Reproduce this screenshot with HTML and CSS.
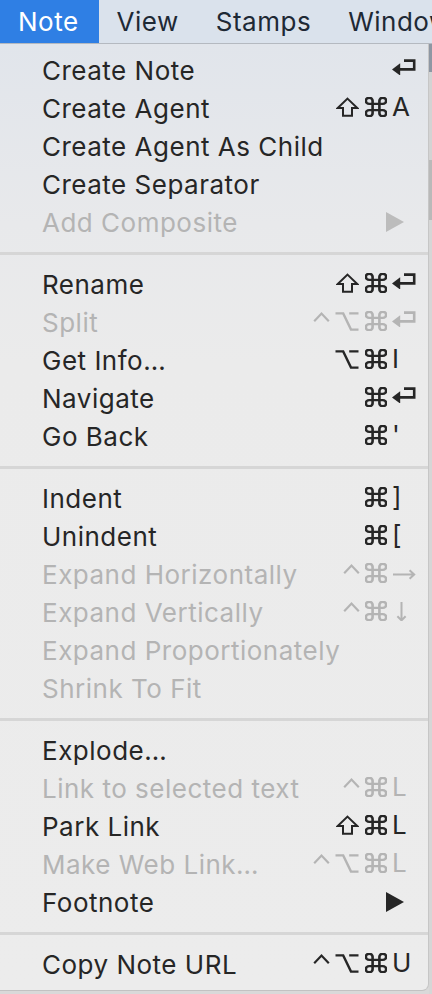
FILE: index.html
```html
<!DOCTYPE html>
<html>
<head>
<meta charset="utf-8">
<link rel="stylesheet" href="styles.css">
</head>
<body>
<svg class="sprite" xmlns="http://www.w3.org/2000/svg">
  <symbol id="i-shift" viewBox="0 0 23 20"><path d="M11.5 1.6L21.3 11H16V18.8H7V11H1.7Z" fill="none" stroke="currentColor" stroke-width="2" stroke-linejoin="miter"/></symbol>
  <symbol id="i-cmd" viewBox="2.3 2.3 19.4 19.4" preserveAspectRatio="none"><path d="M15 6v12a3 3 0 1 0 3-3H6a3 3 0 1 0 3 3V6a3 3 0 1 0-3 3h12a3 3 0 1 0-3-3" fill="none" stroke="currentColor" stroke-width="2.3"/></symbol>
  <symbol id="i-opt" viewBox="0 0 24 20"><path d="M0.5 2.4H8.2L16 18.6H23.5M14.2 2.4H23.5" fill="none" stroke="currentColor" stroke-width="2.4"/></symbol>
  <symbol id="i-ctrl" viewBox="0 0 17 20"><path d="M1.2 10.2L8.5 2.6L15.8 10.2" fill="none" stroke="currentColor" stroke-width="2.2"/></symbol>
  <symbol id="i-ret" viewBox="0 0 24 16"><path d="M12 1.6H22.2V10.4H6" fill="none" stroke="currentColor" stroke-width="2.6"/><path d="M0 10.4L8.2 4.2V16.6Z" fill="currentColor"/></symbol>
  <symbol id="i-right" viewBox="0 0 24 20"><path d="M1 11.5H22.5M17.6 7.2L22.2 11.5L17.6 15.8" fill="none" stroke="currentColor" stroke-width="2"/></symbol>
  <symbol id="i-down" viewBox="0 0 24 20"><path d="M9.5 1V19.4M5.4 15.2L9.5 19.4L13.6 15.2" fill="none" stroke="currentColor" stroke-width="2"/></symbol>
</svg>
<div class="menubar">
  <span class="mb-item active">Note</span>
  <span class="mb-item">View</span>
  <span class="mb-item">Stamps</span>
  <span class="mb-item">Window</span>
</div>
<div class="desk">
  <div class="menu">
    <div class="item"><span class="label">Create Note</span><span class="mods"></span><span class="key"><svg class="k-ret"><use href="#i-ret"/></svg></span></div>
    <div class="item"><span class="label">Create Agent</span><span class="mods"><svg class="m-shift"><use href="#i-shift"/></svg><svg class="m-cmd"><use href="#i-cmd"/></svg></span><span class="key">A</span></div>
    <div class="item"><span class="label">Create Agent As Child</span></div>
    <div class="item"><span class="label">Create Separator</span></div>
    <div class="item disabled"><span class="label">Add Composite</span><span class="arrow"></span></div>
    <div class="sep"></div>
    <div class="item"><span class="label">Rename</span><span class="mods"><svg class="m-shift"><use href="#i-shift"/></svg><svg class="m-cmd"><use href="#i-cmd"/></svg></span><span class="key"><svg class="k-ret"><use href="#i-ret"/></svg></span></div>
    <div class="item disabled"><span class="label">Split</span><span class="mods"><svg class="m-ctrl"><use href="#i-ctrl"/></svg><svg class="m-opt"><use href="#i-opt"/></svg><svg class="m-cmd"><use href="#i-cmd"/></svg></span><span class="key"><svg class="k-ret"><use href="#i-ret"/></svg></span></div>
    <div class="item"><span class="label">Get Info…</span><span class="mods"><svg class="m-opt"><use href="#i-opt"/></svg><svg class="m-cmd"><use href="#i-cmd"/></svg></span><span class="key">I</span></div>
    <div class="item"><span class="label">Navigate</span><span class="mods"><svg class="m-cmd"><use href="#i-cmd"/></svg></span><span class="key"><svg class="k-ret"><use href="#i-ret"/></svg></span></div>
    <div class="item"><span class="label">Go Back</span><span class="mods"><svg class="m-cmd"><use href="#i-cmd"/></svg></span><span class="key">'</span></div>
    <div class="sep"></div>
    <div class="item"><span class="label">Indent</span><span class="mods"><svg class="m-cmd"><use href="#i-cmd"/></svg></span><span class="key">]</span></div>
    <div class="item"><span class="label">Unindent</span><span class="mods"><svg class="m-cmd"><use href="#i-cmd"/></svg></span><span class="key">[</span></div>
    <div class="item disabled"><span class="label">Expand Horizontally</span><span class="mods"><svg class="m-ctrl"><use href="#i-ctrl"/></svg><svg class="m-cmd"><use href="#i-cmd"/></svg></span><span class="key"><svg class="k-arr"><use href="#i-right"/></svg></span></div>
    <div class="item disabled"><span class="label">Expand Vertically</span><span class="mods"><svg class="m-ctrl"><use href="#i-ctrl"/></svg><svg class="m-cmd"><use href="#i-cmd"/></svg></span><span class="key"><svg class="k-arr"><use href="#i-down"/></svg></span></div>
    <div class="item disabled"><span class="label">Expand Proportionately</span></div>
    <div class="item disabled"><span class="label">Shrink To Fit</span></div>
    <div class="sep"></div>
    <div class="item"><span class="label">Explode…</span></div>
    <div class="item disabled"><span class="label">Link to selected text</span><span class="mods"><svg class="m-ctrl"><use href="#i-ctrl"/></svg><svg class="m-cmd"><use href="#i-cmd"/></svg></span><span class="key">L</span></div>
    <div class="item"><span class="label">Park Link</span><span class="mods"><svg class="m-shift"><use href="#i-shift"/></svg><svg class="m-cmd"><use href="#i-cmd"/></svg></span><span class="key">L</span></div>
    <div class="item disabled"><span class="label">Make Web Link…</span><span class="mods"><svg class="m-ctrl"><use href="#i-ctrl"/></svg><svg class="m-opt"><use href="#i-opt"/></svg><svg class="m-cmd"><use href="#i-cmd"/></svg></span><span class="key">L</span></div>
    <div class="item"><span class="label">Footnote</span><span class="arrow"></span></div>
    <div class="sep"></div>
    <div class="item"><span class="label">Copy Note URL</span><span class="mods"><svg class="m-ctrl"><use href="#i-ctrl"/></svg><svg class="m-opt"><use href="#i-opt"/></svg><svg class="m-cmd"><use href="#i-cmd"/></svg></span><span class="key">U</span></div>
  </div>
  <div class="edge"></div>
</div>
</body>
</html>
```

FILE: styles.css
```css
* { box-sizing: border-box; }
html, body { margin: 0; padding: 0; }
body {
  width: 432px;
  height: 994px;
  overflow: hidden;
  background: #d9d9d9;
  font-family: "Inter", "DejaVu Sans", sans-serif;
}
.sprite { position: absolute; width: 0; height: 0; overflow: hidden; }
.menubar {
  height: 44px;
  display: flex;
  align-items: stretch;
  background: #dae2ec;
  border-bottom: 1px solid #b4b9c0;
  white-space: nowrap;
  overflow: hidden;
}
.mb-item {
  display: flex;
  align-items: center;
  padding: 0 19px 0 18px;
  font-size: 26px;
  letter-spacing: 0.5px;
  color: #1e2935;
}
.mb-item.active {
  background: #2f7fe4;
  color: #ffffff;
  padding-right: 20px;
}
.desk {
  display: flex;
  height: 950px;
}
.menu {
  width: 429px;
  height: 947px;
  padding: 7px 0;
  background: linear-gradient(180deg, #e1e5eb 0px, #e8e9eb 180px, #ebebeb 320px, #ececec 100%);
  border-right: 1px solid #c6c6c6;
  border-bottom: 1px solid #c2c2c2;
  border-bottom-right-radius: 7px;
}
.edge {
  flex: 1;
  background: linear-gradient(180deg, #8e97a3 0px, #8e97a3 28px, #d3d3d3 28px, #d3d3d3 116px, #b9b9b9 116px, #b9b9b9 176px, #d6d6d6 176px);
}
.item {
  height: 38px;
  display: grid;
  grid-template-columns: 1fr auto 27px;
  align-items: center;
  padding: 0 9px 0 42px;
  font-size: 26px;
  letter-spacing: 0.5px;
  color: #262626;
}
.item.disabled { color: #b4b4b4; }
.label { grid-column: 1; white-space: nowrap; }
.mods {
  grid-column: 2;
  justify-self: end;
  margin-right: 5px;
  margin-bottom: 2px;
  display: flex;
  gap: 6px;
  height: 20px;
}
.mods svg { height: 20px; display: block; }
.m-shift { width: 23px; }
.m-cmd { width: 22px; }
.m-opt { width: 24px; }
.m-ctrl { width: 17px; margin-right: -1px; }
.key {
  grid-column: 3;
  display: flex;
  align-items: flex-start;
  height: 20px;
  margin-bottom: 2px;
  line-height: 20px;
  letter-spacing: 0;
}
.k-ret { width: 24px; height: 16px; display: block; }
.k-arr { width: 24px; height: 20px; display: block; }
.arrow {
  grid-column: 2 / 4;
  justify-self: end;
  margin-right: 15px;
  width: 0;
  height: 0;
  border-top: 10px solid transparent;
  border-bottom: 10px solid transparent;
  border-left: 18px solid #262626;
}
.item.disabled .arrow { border-left-color: #bcbcbc; }
.sep {
  height: 24px;
  display: flex;
  align-items: center;
}
.sep::before {
  content: "";
  display: block;
  width: 100%;
  height: 3px;
  background: #d6d6d6;
}
```
